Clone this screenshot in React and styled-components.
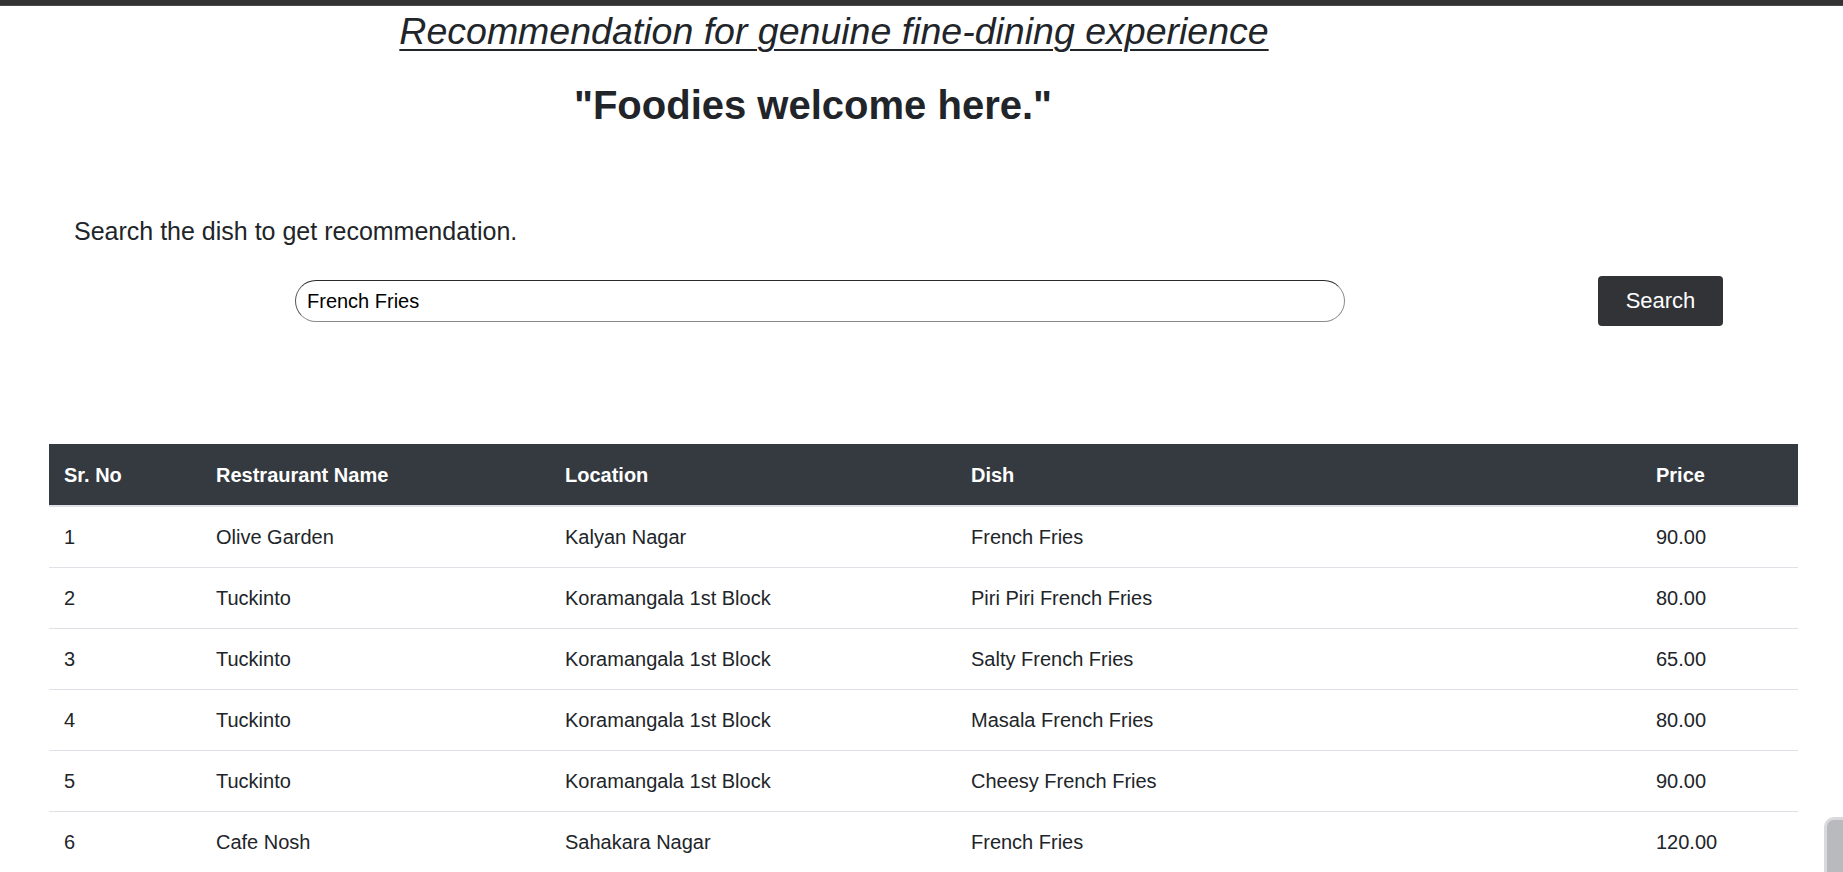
import React from 'react'
import styled, { createGlobalStyle } from 'styled-components';

const GlobalStyle = createGlobalStyle`
  html, body {
    margin: 0;
    padding: 0;
    overflow: hidden;
    background: #fff;
  }
  body {
    font-family: "Liberation Sans", Arial, sans-serif;
    color: #212529;
  }
`

const TopBar = styled.div`
  height: 5px;
  background: #333333;
  border-bottom: 1px solid #4a4a4a;
`

const Page = styled.div`
  display: flex;
  flex-direction: column;
`

const Heading = styled.div`
  text-align: center;
  padding-right: ${(p) => p.$offset}px;
  margin-top: ${(p) => p.$top}px;
`

const Title = styled.h2`
  margin: 0;
  display: inline-block;
  font-size: 37.5px;
  line-height: 1.2;
  font-style: italic;
  font-weight: 400;
  text-decoration: underline;
  text-decoration-thickness: 2px;
  text-underline-offset: 5px;
`

const Slogan = styled.h2`
  margin: 0;
  font-size: 40px;
  line-height: 1.2;
  font-weight: 700;
`

const Lead = styled.p`
  margin: 87px 0 0 74px;
  font-size: 25px;
  line-height: 30px;
`

const SearchRow = styled.div`
  display: flex;
  align-items: center;
  gap: 253px;
  padding-left: 295px;
  margin-top: 30px;
`

const Input = styled.input`
  width: 1050px;
  height: 42px;
  box-sizing: border-box;
  border-radius: 21px;
  border: 1px solid;
  border-color: #2a2a2a #8a8a8a #8a8a8a #555;
  padding: 0 11px;
  font-family: "Liberation Sans", Arial, sans-serif;
  font-size: 20px;
  color: #000;
  outline: none;
`

const Button = styled.button`
  width: 125px;
  height: 50px;
  border: none;
  border-radius: 4px;
  background: #313337;
  color: #fff;
  font-family: "Liberation Sans", Arial, sans-serif;
  font-size: 22px;
  cursor: pointer;
`

const TableWrap = styled.div`
  margin: 118px 45px 0 49px;
`

const Table = styled.table`
  width: 1749px;
  border-collapse: collapse;
  table-layout: fixed;
  font-size: 20px;
`

const Th = styled.th`
  box-sizing: border-box;
  width: ${(p) => p.$w}px;
  text-align: left;
  padding: 15px;
  line-height: 30px;
  background: #343a40;
  color: #fff;
  font-weight: 700;
  border-top: 1px solid #343a40;
  border-bottom: 2px solid #dee2e6;
`

const Td = styled.td`
  padding: 15px;
  line-height: 30px;
  border-top: 1px solid #dee2e6;
`

const ScrollThumb = styled.div`
  position: fixed;
  left: 1824px;
  top: 817px;
  width: 30px;
  height: 70px;
  box-sizing: border-box;
  border: 3px solid #d9d9dd;
  border-radius: 10px;
  background: #b9babe;
`

const columns = [
  { label: 'Sr. No', w: 152 },
  { label: 'Restraurant Name', w: 349 },
  { label: 'Location', w: 406 },
  { label: 'Dish', w: 685 },
  { label: 'Price', w: 157 },
]

const rows = [
  ['1', 'Olive Garden', 'Kalyan Nagar', 'French Fries', '90.00'],
  ['2', 'Tuckinto', 'Koramangala 1st Block', 'Piri Piri French Fries', '80.00'],
  ['3', 'Tuckinto', 'Koramangala 1st Block', 'Salty French Fries', '65.00'],
  ['4', 'Tuckinto', 'Koramangala 1st Block', 'Masala French Fries', '80.00'],
  ['5', 'Tuckinto', 'Koramangala 1st Block', 'Cheesy French Fries', '90.00'],
  ['6', 'Cafe Nosh', 'Sahakara Nagar', 'French Fries', '120.00'],
]

const App = () => {
  return (
    <>
      <GlobalStyle />
      <TopBar />
      <Page>
        <Heading $offset={175} $top={3}>
          <Title>Recommendation for genuine fine-dining experience</Title>
        </Heading>
        <Heading $offset={217} $top={27}>
          <Slogan>"Foodies welcome here."</Slogan>
        </Heading>
        <Lead>Search the dish to get recommendation.</Lead>
        <SearchRow>
          <Input defaultValue='French Fries' />
          <Button>Search</Button>
        </SearchRow>
        <TableWrap>
          <Table>
            <thead>
              <tr>
                {columns.map((c) => <Th key={c.label} $w={c.w}>{c.label}</Th>)}
              </tr>
            </thead>
            <tbody>
              {rows.map((r) => (
                <tr key={r[0]}>
                  {r.map((cell, i) => <Td key={i}>{cell}</Td>)}
                </tr>
              ))}
            </tbody>
          </Table>
        </TableWrap>
      </Page>
      <ScrollThumb />
    </>
  )
}

export default App;
